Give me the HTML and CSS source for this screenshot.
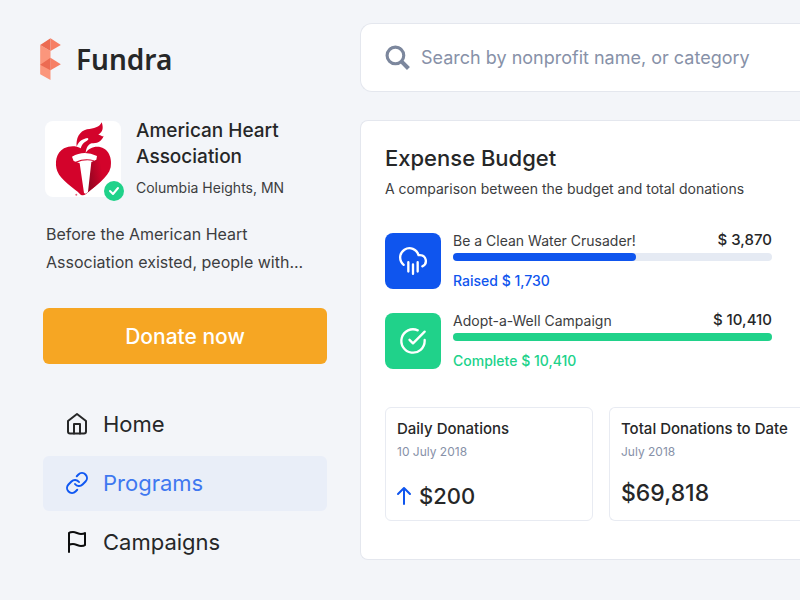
FILE: index.html
```html
<!DOCTYPE html>
<html lang="en">
<head>
    <meta charset="UTF-8">
    <meta name="viewport" content="width=device-width, initial-scale=1.0">
    <title>Fundra</title>
    <link rel="stylesheet" href="styles.css">
</head>
<body>
    <div class="layout">
        <aside class="sidebar">
            <a class="brand" href="#">
                <svg class="brand-mark" viewBox="30 36 62 126" aria-hidden="true">
                    <path fill="#fb967c" d="M30 57 61 75v87L30 145z"/>
                    <path fill="#ec6b52" d="M30 57 61 37V75z"/>
                    <path fill="#f67f65" d="M61 37 92 57 61 75z"/>
                    <path fill="#ec6b52" d="M30 116 61 95V133z"/>
                    <path fill="#f67f65" d="M61 95 92 115 61 133z"/>
                </svg>
                <span>Fundra</span>
            </a>

            <div class="profile">
                <div class="avatar">
                    <svg viewBox="27 33 228 228" role="img" aria-label="American Heart Association logo">
                        <defs>
                            <linearGradient id="shade" x1="0" y1="0.500" x2="0.800" y2="0.200">
                                <stop offset="0" stop-color="#8f0520"/>
                                <stop offset="0.900" stop-color="#d3032b"/>
                            </linearGradient>
                        </defs>
                        <path fill="#d3032b" d="M149 128C136 108 108 103 84 115 60 128 55 160 64 184 75 212 112 232 134 254q8 4 15-1C176 229 217 204 224 172 230 138 213 110 184 110 168 110 157 117 149 128z"/>
                        <path fill="url(#shade)" d="M183 138 212 167C217 204 178 226 150 252L166 154z"/>
                        <path fill="#fff" d="M108 140Q144 119 183 138L181 149 166 156 156 246Q151 254 144 249L131 160 113 153z"/>
                        <path fill="#d3032b" d="M119 155Q146 143 174 151L173 153Q146 147 121 158z"/>
                        <path fill="#d3032b" d="M122 111C119 86 130 63 153 58 174 55 190 53 197 37 203 54 201 66 187 74 200 76 197 82 203 77 197 96 181 100 167 100 156 103 151 114 149 128L134 126C132 111 139 99 153 92 159 89 158 85 154 84 137 88 126 96 122 111z"/>
                        <circle cx="121" cy="254" r="3" fill="#e4647c"/>
                    </svg>
                    <span class="verified">
                        <svg viewBox="0 0 20 20" aria-label="Verified"><path d="M6 10l3 3 5-6"/></svg>
                    </span>
                </div>
                <div class="profile-text">
                    <h1>American Heart Association</h1>
                    <p>Columbia Heights, MN</p>
                </div>
            </div>

            <p class="about">Before the American Heart Association existed, people with...</p>

            <button class="donate" type="button">Donate now</button>

            <nav class="menu">
                <a href="#">
                    <svg viewBox="0 0 24 24"><path d="M3 9l9-7 9 7v10.500a2 2 0 0 1-2 2H5a2 2 0 0 1-2-2z"/><path d="M9 21.500V12h6v9.500"/></svg>
                    Home
                </a>
                <a class="active" href="#">
                    <svg viewBox="0 0 24 24"><path d="M10 13a5 5 0 0 0 7.540.540l3-3a5 5 0 0 0-7.070-7.070l-1.720 1.710"/><path d="M14 11a5 5 0 0 0-7.540-.540l-3 3a5 5 0 0 0 7.070 7.070l1.710-1.710"/></svg>
                    Programs
                </a>
                <a class="flag" href="#">
                    <svg viewBox="0 0 24 24"><path d="M4 15s1-1 4-1 5 2 8 2 4-1 4-1V3s-1 1-4 1-5-2-8-2-4 1-4 1z"/><path d="M4 22v-7"/></svg>
                    Campaigns
                </a>
            </nav>
        </aside>

        <main class="content">
            <form class="search">
                <label for="search">
                    <svg viewBox="0 0 24 24" aria-label="Search"><circle cx="10" cy="10" r="8"/><path class="handle" d="M15.500 15.500l7 7"/></svg>
                </label>
                <input type="text" id="search" placeholder="Search by nonprofit name, or category">
            </form>

            <section class="panel">
                <h2>Expense Budget</h2>
                <p class="panel-note">A comparison between the budget and total donations</p>

                <div class="budgets">
                    <div class="budget blue">
                        <div class="budget-icon">
                            <svg viewBox="0 0 24 24"><path d="M20 16.580A5 5 0 0 0 18 7h-1.260A8 8 0 1 0 4 15.250"/><path d="M8 13v8M12 15v8M16 13v8"/></svg>
                        </div>
                        <div class="budget-body">
                            <div class="budget-head"><span>Be a Clean Water Crusader!</span> <strong>$ 3,870</strong></div>
                            <div class="bar"><div class="bar-fill" style="width: 57.500%"></div></div>
                            <div class="budget-status">Raised $ 1,730</div>
                        </div>
                    </div>
                    <div class="budget green">
                        <div class="budget-icon">
                            <svg viewBox="0 0 24 24"><path d="M22 11.080V12a10 10 0 1 1-5.930-9.140"/><path d="M22 4L12 14.010l-3-3"/></svg>
                        </div>
                        <div class="budget-body">
                            <div class="budget-head"><span>Adopt-a-Well Campaign</span> <strong>$ 10,410</strong></div>
                            <div class="bar"><div class="bar-fill" style="width: 100%"></div></div>
                            <div class="budget-status">Complete $ 10,410</div>
                        </div>
                    </div>
                </div>

                <div class="stats">
                    <div class="stat">
                        <h3>Daily Donations</h3>
                        <p>10 July 2018</p>
                        <div class="amount">
                            <svg viewBox="0 0 14 18"><path d="M7 17V2M1 7l6-6 6 6"/></svg>
                            $200
                        </div>
                    </div>
                    <div class="stat stat-total">
                        <h3>Total Donations to Date</h3>
                        <p>July 2018</p>
                        <div class="amount">$69,818</div>
                    </div>
                </div>
            </section>
        </main>
    </div>
</body>
</html>
```
FILE: styles.css
```css
* {
    box-sizing: border-box;
}
body {
    margin: 0;
    font-family: Inter, "Liberation Sans", sans-serif;
    background-color: #f3f5f9;
    color: #262728;
}
h1, h2, h3, p {
    margin: 0;
    font-weight: 500;
}
a {
    color: inherit;
    text-decoration: none;
}
svg {
    display: block;
    flex: none;
    overflow: visible;
}
.menu svg, .budget-icon svg, .verified svg, .search svg, .amount svg {
    fill: none;
    stroke: currentColor;
    stroke-width: 2;
    stroke-linecap: round;
    stroke-linejoin: round;
}
.layout {
    display: grid;
    grid-template-columns: 284px 1fr;
    column-gap: 33px;
    padding: 23px 0 40px 43px;
}
.sidebar {
    padding-top: 14px;
}

/* brand */
.brand {
    display: flex;
    align-items: center;
    gap: 15px;
    height: 44px;
    margin-left: -3px;
    font-family: "Noto Sans", sans-serif;
    font-size: 28px;
    font-weight: 600;
}
.brand-mark {
    width: 21px;
    height: 42px;
}

/* profile */
.profile {
    display: flex;
    gap: 15px;
    margin-top: 37px;
    padding-left: 2px;
}
.avatar {
    position: relative;
    flex: none;
    width: 76px;
    height: 76px;
    margin-top: 3px;
    border-radius: 8px;
    background: white;
}
.verified {
    position: absolute;
    right: -3px;
    bottom: -4px;
    width: 20px;
    height: 20px;
    border-radius: 50%;
    background: #20d28a;
    color: white;
}
.profile h1 {
    font-size: 19px;
    line-height: 26px;
}
.profile p {
    margin-top: 8px;
    font-size: 14px;
    font-weight: 400;
    line-height: 20px;
    color: #3c3d40;
}
.about {
    margin-top: 22px;
    padding-left: 3px;
    font-size: 16px;
    font-weight: 400;
    line-height: 28px;
    color: #3c3d40;
}
.donate {
    display: block;
    width: 100%;
    height: 56px;
    margin-top: 32px;
    border: none;
    border-radius: 6px;
    background: #f6a623;
    color: white;
    font-family: inherit;
    font-size: 21px;
    font-weight: 500;
    cursor: pointer;
}

/* menu */
.menu {
    display: flex;
    flex-direction: column;
    gap: 4px;
    margin-top: 33px;
}
.menu a {
    display: flex;
    align-items: center;
    gap: 14px;
    height: 55px;
    padding: 0 0 2px 22px;
    border-radius: 6px;
    font-size: 22px;
}
.menu svg {
    width: 24px;
    height: 24px;
}
.menu .active {
    background: #e9eef8;
    color: #3f78f0;
}
.menu .active svg {
    color: #0f57f2;
}
.menu .flag svg {
    color: #0c0d0e;
}

/* search */
.search {
    display: flex;
    align-items: center;
    gap: 11px;
    height: 69px;
    padding-left: 24px;
    border: 1px solid #e4e7ee;
    border-right: none;
    border-radius: 12px 0 0 12px;
    background: white;
    color: #7c879d;
}
.search svg {
    width: 25px;
    height: 25px;
    stroke-width: 3;
    stroke-linecap: butt;
}
.search .handle {
    stroke-width: 4;
}
.search input {
    flex: 1;
    min-width: 0;
    padding: 0;
    border: none;
    outline: none;
    background: none;
    font-family: inherit;
    font-size: 18px;
    color: #262728;
}
.search input::placeholder {
    color: #8791a8;
}

/* expense panel */
.panel {
    margin-top: 28px;
    padding: 23px 0 38px 24px;
    border: 1px solid #e4e7ee;
    border-right: none;
    border-radius: 8px 0 0 8px;
    background: white;
}
.panel h2 {
    font-size: 22px;
    line-height: 28px;
}
.panel-note {
    margin-top: 7px;
    font-size: 14px;
    font-weight: 400;
    line-height: 20px;
    color: #3c3d40;
}
.budgets {
    display: flex;
    flex-direction: column;
    gap: 24px;
    margin-top: 34px;
    padding-right: 28px;
}
.budget {
    display: flex;
    gap: 12px;
    height: 56px;
}
.budget-icon {
    display: flex;
    align-items: center;
    justify-content: center;
    width: 56px;
    height: 56px;
    border-radius: 8px;
    color: white;
}
.budget-icon svg {
    width: 28px;
    height: 28px;
}
.budget-body {
    flex: 1;
}
.budget-head {
    display: flex;
    justify-content: space-between;
    align-items: flex-start;
    height: 20px;
    font-size: 14px;
    line-height: 16px;
    color: #3c3d40;
}
.budget-head strong {
    font-size: 15px;
    font-weight: 500;
    line-height: 14px;
    color: #262728;
}
.bar {
    height: 8px;
    border-radius: 4px;
    background: #e5eaf3;
}
.bar-fill {
    height: 8px;
    border-radius: 4px;
}
.budget-status {
    margin-top: 10px;
    font-size: 14px;
    font-weight: 500;
    line-height: 20px;
}
.blue .budget-icon, .blue .bar-fill {
    background: #0f55ee;
}
.blue .budget-status {
    color: #0f55ee;
}
.green .budget-icon, .green .bar-fill {
    background: #20d28a;
}
.green .budget-status {
    color: #20d28a;
}

/* stats */
.stats {
    display: grid;
    grid-template-columns: 208px 1fr;
    gap: 16px;
    margin-top: 38px;
}
.stat {
    height: 114px;
    padding: 10px 0 0 11px;
    border: 1px solid #e8ebf2;
    border-radius: 6px;
}
.stat-total {
    border-right: none;
    border-radius: 6px 0 0 6px;
}
.stat h3 {
    font-size: 15px;
    line-height: 22px;
    white-space: nowrap;
}
.stat p {
    margin-top: 2px;
    font-size: 12px;
    font-weight: 400;
    line-height: 20px;
    color: #8791a8;
}
.amount {
    display: flex;
    align-items: center;
    gap: 8px;
    margin-top: 18px;
    font-size: 22px;
    font-weight: 500;
    line-height: 32px;
}
.stat-total .amount {
    margin-top: 15px;
    font-size: 23px;
}
.amount svg {
    width: 14px;
    height: 18px;
    color: #0f55ee;
}
```
